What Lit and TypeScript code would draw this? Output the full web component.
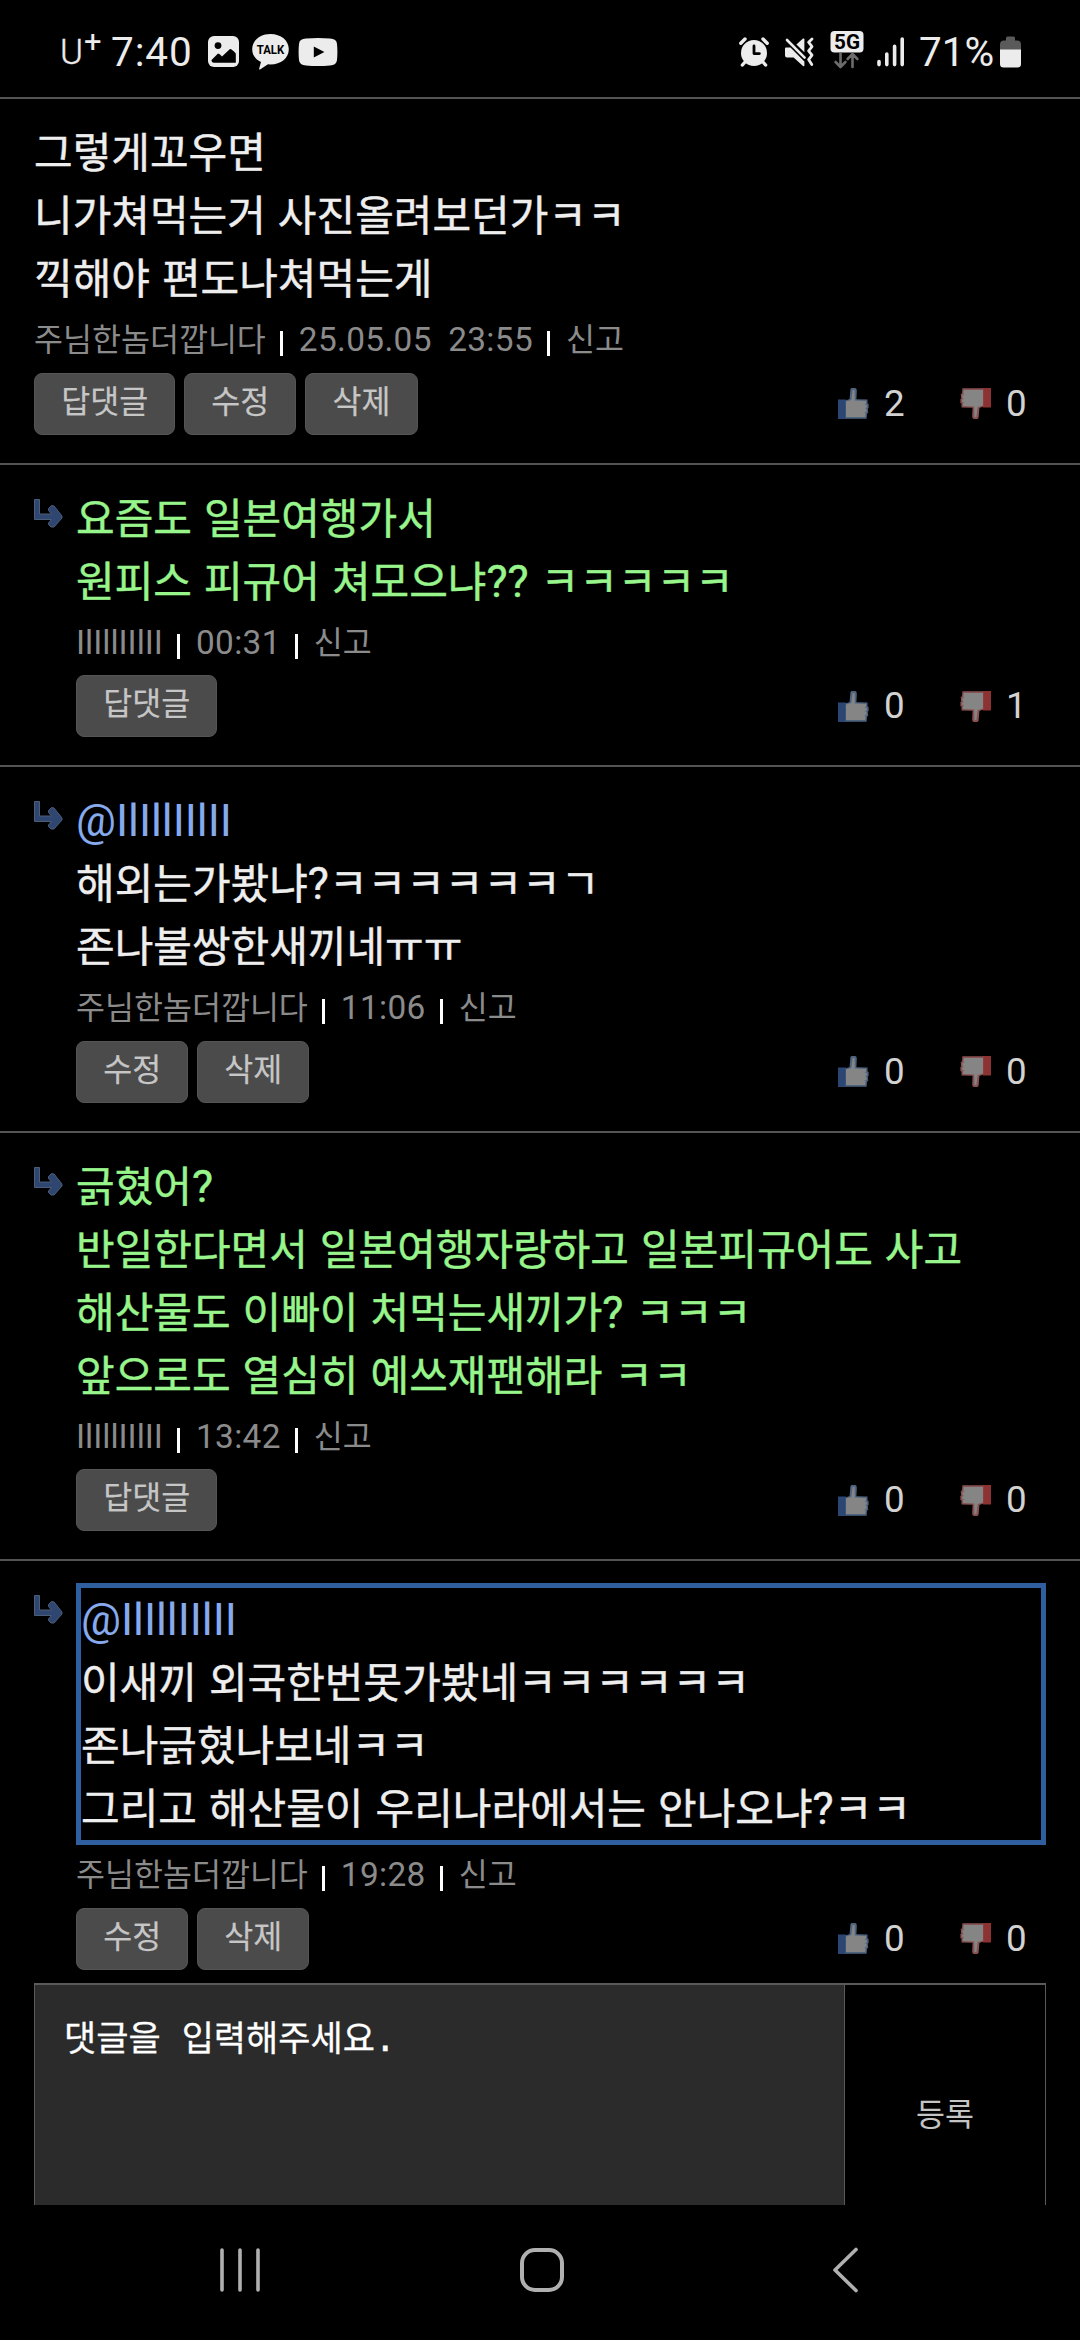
import { LitElement, html, css, svg, nothing } from "lit";
import { customElement, property } from "lit/decorators.js";
import { classMap } from "lit/directives/class-map.js";

type Tone = "plain" | "green";

interface Comment {
  author: string;
  time: string;
  lines: string[];
  mention?: string;
  tone: Tone;
  reply: boolean;
  focused?: boolean;
  actions: string[];
  up: number;
  down: number;
}

const ME = "주님한놈더깝니다";
const OTHER = "IlIllIIlII";

const COMMENTS: Comment[] = [
  {
    author: ME,
    time: "25.05.05\u00a0 23:55",
    lines: ["그렇게꼬우면", "니가쳐먹는거 사진올려보던가ㅋㅋ", "끽해야 편도나쳐먹는게"],
    tone: "plain",
    reply: false,
    actions: ["답댓글", "수정", "삭제"],
    up: 2,
    down: 0,
  },
  {
    author: OTHER,
    time: "00:31",
    lines: ["요즘도 일본여행가서", "원피스 피규어 쳐모으냐?? ㅋㅋㅋㅋㅋ"],
    tone: "green",
    reply: true,
    actions: ["답댓글"],
    up: 0,
    down: 1,
  },
  {
    author: ME,
    time: "11:06",
    mention: "@" + OTHER,
    lines: ["해외는가봤냐?ㅋㅋㅋㅋㅋㅋㄱ", "존나불쌍한새끼네ㅠㅠ"],
    tone: "plain",
    reply: true,
    actions: ["수정", "삭제"],
    up: 0,
    down: 0,
  },
  {
    author: OTHER,
    time: "13:42",
    lines: [
      "긁혔어?",
      "반일한다면서 일본여행자랑하고 일본피규어도 사고",
      "해산물도 이빠이 처먹는새끼가? ㅋㅋㅋ",
      "앞으로도 열심히 예쓰재팬해라 ㅋㅋ",
    ],
    tone: "green",
    reply: true,
    actions: ["답댓글"],
    up: 0,
    down: 0,
  },
  {
    author: ME,
    time: "19:28",
    mention: "@" + OTHER,
    lines: [
      "이새끼 외국한번못가봤네ㅋㅋㅋㅋㅋㅋ",
      "존나긁혔나보네ㅋㅋ",
      "그리고 해산물이 우리나라에서는 안나오냐?ㅋㅋ",
    ],
    tone: "plain",
    reply: true,
    focused: true,
    actions: ["수정", "삭제"],
    up: 0,
    down: 0,
  },
];

// Latin runs are set slightly larger than the Hangul around them.
const mixed = (text: string) =>
  text
    .split(/([\x21-\x7e]+)/)
    .map((part, i) => (i % 2 ? html`<span class="latin">${part}</span>` : part));

const thumbShape = svg`
  <rect x="0" y="11.5" width="8" height="19.5" fill="var(--cuff)"/>
  <path d="M7.6 12.5 L11.6 11 L12.4 1.4 Q12.6 0 14 0 L17.4 0 Q19 0.4 18.8 3 L18.4 11.2 L29.5 11.4 L29.5 15.5 L30.6 16 L30.6 20 L29.8 20.6 L30.2 25 L29 25.6 L28.6 30.8 L7.6 30.8 Z" fill="var(--edge)"/>
  <path d="M8 13.4 L13.4 12 L14.6 2 L16.6 2 L16.8 12.6 L28 13 L28 15.8 L26.5 16.4 L28.8 17 L28.8 19.4 L26.8 20 L28.6 21 L28.4 24 L26.4 24.6 L27.6 25.6 L27.2 29 L8 29 Z" fill="#858585"/>`;

@customElement("status-bar")
export class StatusBar extends LitElement {
  static styles = css`
    :host {
      display: flex;
      justify-content: space-between;
      height: 97.25px;
      padding: 0 59px 0 60px;
      box-sizing: border-box;
      font-family: Roboto, "Noto Sans CJK KR", sans-serif;
      color: #ececec;
    }
    .side {
      display: flex;
      align-items: center;
      height: 103px;
    }
    .carrier {
      font-size: 35px;
      font-weight: 300;
      line-height: 40px;
      margin-top: 3px;
      width: 24px;
      -webkit-text-stroke: 0.4px #ececec;
    }
    .plus {
      font-size: 31px;
      line-height: 30px;
      margin-top: -19px;
      width: 27px;
    }
    .clock {
      font-size: 40.5px;
      line-height: 48px;
      letter-spacing: 0.9px;
      width: 97px;
    }
    .battery-text {
      font-size: 40.5px;
      line-height: 48px;
      width: 81px;
      margin-left: 14px;
    }
    svg {
      display: block;
      flex: none;
    }
    .talk {
      margin-left: 13px;
    }
    .tube {
      margin-left: 9px;
    }
    .mute {
      margin-left: 15px;
    }
    .net {
      margin-left: 16px;
      margin-top: -3px;
    }
    .bars {
      margin-left: 13px;
    }
    .icon-text {
      font-family: Roboto, sans-serif;
      font-weight: 700;
    }
  `;

  render() {
    return html`
      <div class="side">
        <span class="carrier">U</span><span class="plus">+</span>
        <span class="clock">7:40</span>
        <svg width="31" height="31" viewBox="0 0 31 31">
          <rect width="31" height="31" rx="6" fill="#ececec" />
          <circle cx="10" cy="9.6" r="3.4" fill="#000" />
          <path d="M3.5 24 L10 17.6 Q11.5 17.6 14 20.6 L22 13 Q24 13 27.8 17.6 V26.8 H6 Q3.5 26.8 3.5 24Z" fill="#000" />
        </svg>
        <svg class="talk" width="37" height="36" viewBox="0 0 37 36">
          <path d="M18.5 0 C29 0 36.8 6.5 36.8 15.2 C36.8 24 29 30.4 18.5 30.4 L16 30.3 L8 35.4 Q7 35.8 7.2 34.6 L9 28 C3.5 25.4 0.2 21 0.2 15.2 C0.2 6.5 8 0 18.5 0Z" fill="#ececec" />
          <text class="icon-text" x="18.5" y="20.4" font-size="13.4" text-anchor="middle" textLength="27.5" lengthAdjust="spacingAndGlyphs" fill="#000">TALK</text>
        </svg>
        <svg class="tube" width="40" height="28" viewBox="0 0 40 28">
          <path d="M8 0.6 Q20 -0.4 32 0.6 Q38.6 0.8 39 6 Q39.8 14 39 22 Q38.6 27.2 32 27.4 Q20 28.4 8 27.4 Q1.4 27.2 1 22 Q0.2 14 1 6 Q1.4 0.8 8 0.6Z" fill="#ececec" />
          <path d="M15.8 8.4 L26.4 14 L15.8 19.6Z" fill="#000" />
        </svg>
      </div>
      <div class="side">
        <svg width="30" height="30" viewBox="0 0 30 30">
          <circle cx="15" cy="16" r="13" fill="#ececec" />
          <path d="M1.8 6.2 L6 2 M24 2 L28.2 6.2 M5.6 25.5 L3.4 28 M24.4 25.5 L26.6 28" stroke="#ececec" stroke-width="3.4" stroke-linecap="round" />
          <path d="M15 9 V16.6 H20.4" fill="none" stroke="#000" stroke-width="2.8" stroke-linecap="round" stroke-linejoin="round" />
        </svg>
        <svg class="mute" width="30" height="30" viewBox="0 0 30 30">
          <path d="M1 11.6 Q1 10.6 2 10.6 H6.5 L20.4 24.4 V28.6 Q20.2 29.8 19 29 L9.6 20.6 H3 Q1 20.6 1 18.6Z" fill="#ececec" />
          <path d="M12.4 7.6 L19 1.6 Q20.4 1 20.4 2.4 V15.2Z" fill="#ececec" />
          <path d="M3 3 L20.6 20.6" stroke="#ececec" stroke-width="2.6" stroke-linecap="round" />
          <path d="M28 2 L24.6 5.2 L28 9.6 L24.6 13.8 L28 18.2 L24.6 22.6 L27.8 27.6" fill="none" stroke="#ececec" stroke-width="2.8" stroke-linecap="round" stroke-linejoin="round" />
        </svg>
        <svg class="net" width="34" height="38" viewBox="0 0 34 38">
          <rect x="0.5" width="33" height="21.5" rx="4" fill="#ececec" />
          <text class="icon-text" x="17" y="18" font-size="20" text-anchor="middle" textLength="26" lengthAdjust="spacingAndGlyphs" fill="#000">5G</text>
          <path d="M10.5 22.5 V35.5 M5.6 31 L10.5 36 L15.4 31 M22.5 36 V23.5 M17.6 28 L22.5 23 L27.4 28" fill="none" stroke="#6c6c6c" stroke-width="2.6" stroke-linecap="round" stroke-linejoin="round" />
        </svg>
        <svg class="bars" width="28" height="30" viewBox="0 0 28 30">
          <path d="M2 24.5 V27.6 M9.8 17 V27.6 M17.6 9.4 V27.6 M25.2 2 V27.6" stroke="#ececec" stroke-width="3.6" stroke-linecap="round" />
        </svg>
        <span class="battery-text">71%</span>
        <svg width="21" height="32" viewBox="0 0 21 32">
          <path d="M6 4.5 V2 Q6 0.5 7.5 0.5 H13.5 Q15 0.5 15 2 V4.5 H17 Q21 4.5 21 8.5 V14 H0 V8.5 Q0 4.5 4 4.5Z" fill="#5a5a5a" />
          <path d="M0 13.6 H21 V28 Q21 31.6 17.4 31.6 H3.6 Q0 31.6 0 28Z" fill="#ececec" />
        </svg>
      </div>
    `;
  }
}

@customElement("comment-item")
export class CommentItem extends LitElement {
  @property({ attribute: false }) data!: Comment;

  static styles = css`
    :host {
      display: block;
      font-family: Roboto, "Noto Sans CJK KR", sans-serif;
    }
    .item {
      display: flex;
      border-top: 2px solid #545454;
      padding: 22px 34px 28.25px;
    }
    .item.focused {
      padding-bottom: 13.5px;
    }
    .arrow {
      flex: none;
      width: 42px;
      padding-top: 12px;
    }
    .arrow svg {
      display: block;
    }
    .body {
      flex: 1;
      min-width: 0;
    }
    .text {
      font-size: 42px;
      line-height: 61px;
      color: #eeeeee;
      white-space: nowrap;
      word-spacing: 1.6px;
      -webkit-text-stroke: 0.45px currentColor;
    }
    .text.green {
      color: #98f58c;
    }
    .text.focused {
      border: 5px solid #2f5f9f;
    }
    .line {
      height: 63px;
      padding-top: 2px;
      box-sizing: border-box;
    }
    .mention {
      color: #86aaec;
      -webkit-text-stroke: 0;
    }
    .latin {
      font-size: 1.06em;
      line-height: 0;
    }
    .meta {
      display: flex;
      align-items: baseline;
      height: 62.25px;
      box-sizing: border-box;
      padding-top: 10px;
      font-size: 31.5px;
      line-height: 42px;
      color: #8b8b8b;
      white-space: pre;
    }
    .time {
      letter-spacing: 0.35px;
    }
    .bar {
      align-self: flex-start;
      width: 3px;
      height: 25px;
      margin: 11px 16px 0 14px;
      background: #ffffff;
    }
    .foot {
      display: flex;
      align-items: center;
      justify-content: space-between;
      height: 62px;
    }
    .actions {
      display: flex;
      gap: 8.8px;
    }
    .btn {
      height: 62px;
      box-sizing: border-box;
      margin: 0;
      padding: 0 26.2px 2px;
      border: 1.3px solid #555555;
      border-radius: 8px;
      background: #4b4b4b;
      color: #c6c6c6;
      font: 400 31.5px/42px Roboto, "Noto Sans CJK KR", sans-serif;
      -webkit-text-stroke: 0.2px currentColor;
    }
    .votes {
      display: flex;
      gap: 54px;
      padding-right: 18px;
    }
    .vote {
      display: flex;
      align-items: center;
      gap: 15px;
      color: #d2d2d2;
      font-size: 36.75px;
      line-height: 42px;
    }
    .vote svg {
      display: block;
    }
    .up {
      --cuff: #2c4674;
      --edge: #4f6480;
    }
    .down {
      --cuff: #8c3232;
      --edge: #8a5252;
      transform: rotate(180deg);
    }
    .count {
      width: 22px;
    }
  `;

  render() {
    const c = this.data;
    const focused = !!c.focused;
    return html`
      <article class=${classMap({ item: true, focused })}>
        ${c.reply
          ? html`<div class="arrow">
              <svg width="29" height="29" viewBox="0 0 29 29">
                <path d="M0.5 0.5 H5.5 V15 H17.5 L14.5 11.5 V9.5 L17.5 6.5 L20 7 L28 17 V19 L20 28 H17 L14.5 25.5 V24 L17.5 20.5 H0.5Z" fill="#2f4670" stroke="#4c5d78" stroke-width="1" />
              </svg>
            </div>`
          : nothing}
        <div class="body">
          <div class=${classMap({ text: true, green: c.tone === "green", focused })}>
            ${c.mention ? html`<div class="line mention">${mixed(c.mention)}</div>` : nothing}
            ${c.lines.map((l) => html`<div class="line">${mixed(l)}</div>`)}
          </div>
          <div class="meta"><span>${mixed(c.author)}</span><i class="bar"></i><span class="time">${mixed(c.time)}</span><i class="bar"></i><span>신고</span></div>
          <div class="foot">
            <div class="actions">${c.actions.map((a) => html`<button class="btn">${a}</button>`)}</div>
            <div class="votes">
              <div class="vote">
                <svg class="up" width="31" height="31" viewBox="0 0 31 31">${thumbShape}</svg>
                <span class="count">${c.up}</span>
              </div>
              <div class="vote">
                <svg class="down" width="31" height="31" viewBox="0 0 31 31">${thumbShape}</svg>
                <span class="count">${c.down}</span>
              </div>
            </div>
          </div>
        </div>
      </article>
    `;
  }
}

@customElement("comment-form")
export class CommentForm extends LitElement {
  static styles = css`
    :host {
      display: flex;
      height: 265px;
      margin: 0 34px;
      box-sizing: border-box;
      border: 1px solid #5a5a5a;
      border-top-width: 2px;
    }
    .input {
      flex: 1;
      min-width: 0;
      margin: 0;
      padding: 28px 29px;
      border: 0;
      border-radius: 0;
      resize: none;
      background: #2b2b2b;
      color: #ffffff;
      font: 400 35px/52px "DejaVu Sans Mono", "Noto Sans CJK KR", monospace;
    }
    .input::placeholder {
      color: #ffffff;
      opacity: 1;
      -webkit-text-stroke: 0.3px #ffffff;
    }
    .submit {
      width: 201px;
      box-sizing: border-box;
      margin: 0;
      padding: 0;
      border: 0;
      border-left: 1px solid #5a5a5a;
      background: #000000;
      color: #c4c4c4;
      font: 400 31.5px/42px Roboto, "Noto Sans CJK KR", sans-serif;
    }
  `;

  render() {
    return html`
      <textarea class="input" placeholder="댓글을 입력해주세요."></textarea>
      <button class="submit">등록</button>
    `;
  }
}

@customElement("nav-bar")
export class NavBar extends LitElement {
  static styles = css`
    :host {
      display: grid;
      grid-template-columns: 338px 266px 340px;
      justify-content: start;
      height: 135px;
      padding-left: 71px;
      box-sizing: border-box;
      align-items: center;
      justify-items: center;
    }
    svg {
      display: block;
      margin-top: -5px;
      fill: none;
      stroke: #b0b0b0;
      stroke-width: 3.6px;
      stroke-linecap: round;
      stroke-linejoin: round;
    }
    .home {
      stroke-width: 4px;
    }
  `;

  render() {
    return html`
      <svg width="46" height="46" viewBox="0 0 46 46"><path d="M5 3 V43 M23 3 V43 M41 3 V43" /></svg>
      <svg class="home" width="46" height="46" viewBox="0 0 46 46"><rect x="3" y="3" width="40" height="40" rx="13" /></svg>
      <svg width="30" height="48" viewBox="0 0 30 48"><path d="M26 3.5 L5 24 L26 44.5" /></svg>
    `;
  }
}

@customElement("app-root")
export class AppRoot extends LitElement {
  static styles = css`
    :host {
      display: flex;
      flex-direction: column;
      width: 1080px;
      height: 2340px;
      overflow: hidden;
      background: #000000;
    }
    .page {
      flex: 1;
      min-height: 0;
      overflow: hidden;
    }
  `;

  render() {
    return html`
      <status-bar></status-bar>
      <main class="page">
        ${COMMENTS.map((c) => html`<comment-item .data=${c}></comment-item>`)}
        <comment-form></comment-form>
      </main>
      <nav-bar></nav-bar>
    `;
  }
}
